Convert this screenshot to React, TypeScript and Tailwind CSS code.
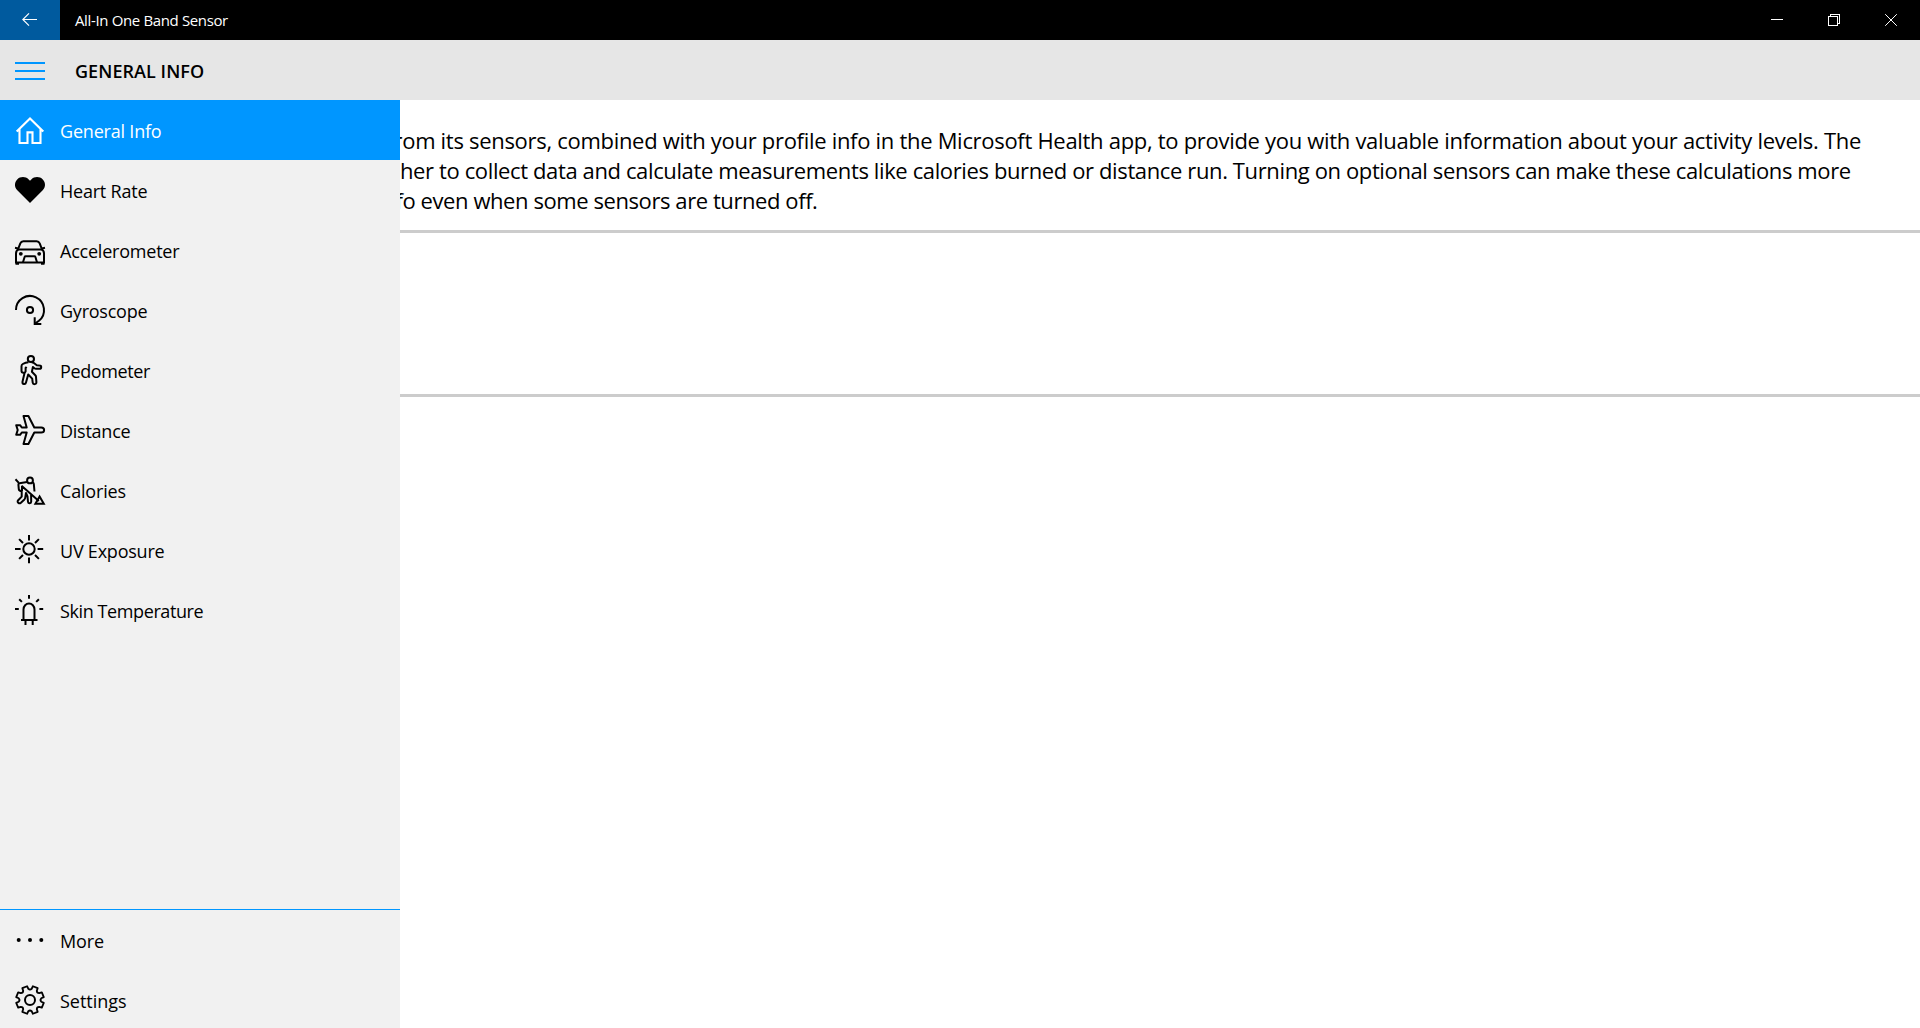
import React from 'react'

interface IconProps {
  children: React.ReactNode
}

const Icon: React.FC<IconProps> = ({ children }) => (
  <svg
    className="h-[30px] w-[30px] shrink-0 overflow-visible"
    viewBox="0 0 30 30"
    fill="none"
    stroke="currentColor"
    strokeWidth={2}
  >
    {children}
  </svg>
)

const HomeIcon = () => (
  <Icon>
    <path d="M1.7 16.6 15 3.4l13.3 13.2M4.5 14.2V28h8V17.4h5V28h8V14.2" strokeWidth={2.1} />
  </Icon>
)

const HeartIcon = () => (
  <Icon>
    <path
      fill="currentColor"
      stroke="none"
      d="M15 28 2.3 15.3C-.8 12-.8 7.5 2.2 4.4c3.1-3.1 8.3-3.2 11.5 0L15 5.7l1.3-1.3c3.2-3.2 8.4-3.1 11.5 0 3 3.1 3 7.6-.1 10.9L15 28Z"
    />
  </Icon>
)

const CarIcon = () => (
  <Icon>
    <path d="M3.2 13.8 5.3 8.3C6 6.7 6.8 6.2 8.3 6.2h13.4c1.5 0 2.3.5 3 2.1l2.1 5.5" />
    <path d="M0 12.8 3 13.4M30 12.8l-3 .6M2.5 14.5h25" />
    <path d="M3.5 14.2C1.7 15.2 1 16.6 1 18.5v9h28v-9c0-1.9-.7-3.3-2.5-4.3M.5 28.8H4M26 28.8h3.5" />
    <path d="M8 27.3 9.6 22c.2-.6.5-.8 1.1-.8h8.6c.6 0 .9.2 1.1.8l1.6 5.3" />
    <circle cx="5.8" cy="18.8" r="1.9" fill="currentColor" stroke="none" />
    <circle cx="24.2" cy="18.8" r="1.9" fill="currentColor" stroke="none" />
  </Icon>
)

const GyroscopeIcon = () => (
  <Icon>
    <path d="M1 15a14 14 0 1 1 22.9 10.8L19.8 28.8" />
    <path d="M19.7 22.3V29h6.6" />
    <circle cx="15" cy="15" r="3.1" />
  </Icon>
)

const WalkIcon = () => (
  <Icon>
    <circle cx="15.9" cy="4" r="3.1" />
    <path
      strokeLinejoin="round"
      d="M13.5 7.2c-2.2.1-4 .8-5.7 1.8-1 .6-1.3 1.1-1.3 2.2v4.6c0 1.3.6 2 1.9 2h1.2L7.5 26.8c-.4 2.5 3 3 3.5.7l2.2-8 4 4.1.5 4c.3 2.2 3.9 2 3.7-.4l-.4-5.4c0-.6-.3-1.1-.7-1.5l-3.400-3.500 1-4.800 1.500 1.300c.4.3.9.5 1.500.5h3.600c2.200 0 2.300-3.300.1-3.400l-2.800-.2-2.900-2.200c-.8-.6-1.400-.8-2.400-.8M11.600 11.900 10.600 13v3.500l-1 1.400"
    />
  </Icon>
)

const PlaneIcon = () => (
  <Icon>
    <path
      strokeLinejoin="round"
      d="M8.5 1h4.9l5.9 11.5h6.9c3.9 0 3.9 5 0 5h-6.9L13.4 29H8.5l3.2-11.5H6.8l-1.7 2.3H1.2L2.7 15 1.2 10.2h3.9l1.7 2.3h4.9L8.5 1Z"
    />
  </Icon>
)

const DiggerIcon = () => (
  <Icon>
    <circle cx="15" cy="5.4" r="2.9" />
    <path
      strokeLinejoin="round"
      d="M.5 4.3 3.6 7.6M6.5 10.8 23.8 26M12 7.1 4.5 8.2c-.8.1-1.2.6-1.1 1.4l.4 4.5c.1 1.3 1 1.9 2.9 1.9v5.6l-3.5 3.6c-1.7 1.9.9 4.1 2.7 2.5l3.5-3.3c.4-.4.7-.9.8-1.5l.8-4.9 1.5 3.5.5 5.3c.3 2.1 3.2 1.9 3.2-.2l-.1-6.6M17.6 7.4c.8.2 1.1.8 1.2 1.5l.7 7.6M7 11v5"
    />
    <path d="m24.6 21.4 4.2 7.3h-8.4l4.2-7.3Z" />
  </Icon>
)

const SunIcon = () => (
  <Icon>
    <circle cx="14" cy="14" r="5.7" />
    <path d="M14 0v5.6M14 22.6v5.6M0 14h5.6M22.6 14h5.6M4.1 4.1 8 8M20 20l3.9 3.9M4.1 23.900 8 20M20 8l3.900-3.900" />
  </Icon>
)

const LedIcon = () => (
  <Icon>
    <path d="M8.5 25V14.5a5.5 6 0 0 1 11 0V25M6 25h16.500M10.500 25v5M17.700 25v5" />
    <path d="M14 0v3.800M0 14h3.800M24.400 14h3.800M4.200 4.200l2.700 2.700M21.200 6.900l2.700-2.700" />
  </Icon>
)

const MoreIcon = () => (
  <Icon>
    <g fill="currentColor" stroke="none">
      <circle cx="3.7" cy="15" r="2" />
      <circle cx="15" cy="15" r="2" />
      <circle cx="26.3" cy="15" r="2" />
    </g>
  </Icon>
)

// eight teeth, with a rounded notch between each pair
const gearPath = (() => {
  const point = (radius: number, deg: number) => {
    const a = (deg * Math.PI) / 180
    return `${(15 + radius * Math.sin(a)).toFixed(2)} ${(15 - radius * Math.cos(a)).toFixed(2)}`
  }
  let d = ''
  for (let i = 0; i < 8; i++) {
    const a = i * 45 + 22.5
    d += `${i === 0 ? 'M' : 'L'}${point(11.4, a - 14)} L${point(14.1, a - 10.5)} L${point(14.1, a + 10.5)} L${point(11.4, a + 14)} Q${point(9.7, a + 22.5)} ${point(11.4, a + 31)} `
  }
  return d + 'Z'
})()

const GearIcon = () => (
  <Icon>
    <path d={gearPath} strokeLinejoin="round" strokeWidth={1.8} />
    <circle cx="15" cy="15" r="5" />
  </Icon>
)

interface NavItem {
  label: string
  icon: React.FC
  tracking: string
}

const mainItems: NavItem[] = [
  { label: 'General Info', icon: HomeIcon, tracking: 'tracking-[-0.2px]' },
  { label: 'Heart Rate', icon: HeartIcon, tracking: 'tracking-[-0.22px]' },
  { label: 'Accelerometer', icon: CarIcon, tracking: 'tracking-[-0.22px]' },
  { label: 'Gyroscope', icon: GyroscopeIcon, tracking: 'tracking-[-0.23px]' },
  { label: 'Pedometer', icon: WalkIcon, tracking: 'tracking-[-0.37px]' },
  { label: 'Distance', icon: PlaneIcon, tracking: 'tracking-[-0.25px]' },
  { label: 'Calories', icon: DiggerIcon, tracking: 'tracking-[-0.18px]' },
  { label: 'UV Exposure', icon: SunIcon, tracking: 'tracking-[-0.22px]' },
  { label: 'Skin Temperature', icon: LedIcon, tracking: 'tracking-[-0.4px]' },
]

const footerItems: NavItem[] = [
  { label: 'More', icon: MoreIcon, tracking: 'tracking-[-0.12px]' },
  { label: 'Settings', icon: GearIcon, tracking: 'tracking-[-0.02px]' },
]

const NavRow: React.FC<{ item: NavItem; active?: boolean }> = ({ item, active }) => (
  <button
    className={`flex h-[60px] w-full shrink-0 items-center gap-[15px] px-[15px] text-left ${
      active ? 'bg-[#0096ff] text-white' : 'text-black'
    }`}
  >
    <item.icon />
    <span className={`pt-0.5 text-[18px] leading-6 ${item.tracking}`}>{item.label}</span>
  </button>
)

const TitleBar = () => (
  <div className="flex h-10 shrink-0 items-center bg-black pr-px text-white">
    <button className="flex h-10 w-[60px] items-center justify-center bg-[#005a9e]">
      <svg className="h-4 w-4" viewBox="0 0 16 16" fill="none" stroke="currentColor" strokeWidth={1.2}>
        <path d="M15 7.5H.8M7 1.3.8 7.5 7 13.7" />
      </svg>
    </button>
    <span className="flex-1 pl-[15px] text-[15px] leading-5 tracking-[-0.36px]">All-In One Band Sensor</span>
    <button className="flex h-10 w-[57px] items-center justify-center">
      <svg className="h-3 w-3" viewBox="0 0 12 12" stroke="currentColor" shapeRendering="crispEdges">
        <path d="M0 5.5h12" />
      </svg>
    </button>
    <button className="flex h-10 w-[57px] items-center justify-center">
      <svg className="h-3 w-3" viewBox="0 0 12 12" fill="none" stroke="currentColor" shapeRendering="crispEdges">
        <path d="M.5 2.5h9v9h-9zM2.500 2.500v-2h9v9h-2" />
      </svg>
    </button>
    <button className="flex h-10 w-[57px] items-center justify-center">
      <svg className="h-3 w-3" viewBox="0 0 12 12" stroke="currentColor">
        <path d="m.2.2 11.6 11.6M11.8.2.2 11.8" />
      </svg>
    </button>
  </div>
)

const PageHeader = () => (
  <header className="flex h-[60px] shrink-0 items-center bg-[#e6e6e6]">
    <button className="flex h-[60px] w-[60px] flex-col items-center justify-center gap-1.5 pt-0.5">
      <span className="h-0.5 w-[30px] bg-[#0096ff]" />
      <span className="h-0.5 w-[30px] bg-[#0096ff]" />
      <span className="h-0.5 w-[30px] bg-[#0096ff]" />
    </button>
    <h1 className="pl-[15px] pt-0.5 text-[18px] leading-6 font-semibold tracking-[0.06px]">GENERAL INFO</h1>
  </header>
)

export default function App() {
  return (
    <div className="flex h-screen flex-col overflow-hidden bg-white font-['Open_Sans','Noto_Sans',sans-serif] text-black">
      <TitleBar />
      <PageHeader />
      <div className="flex min-h-0 flex-1">
        <nav className="flex w-[400px] shrink-0 flex-col justify-between bg-[#f1f1f1]">
          <div className="flex flex-col">
            {mainItems.map((item, index) => (
              <NavRow key={item.label} item={item} active={index === 0} />
            ))}
          </div>
          <div className="flex h-[119px] flex-col overflow-hidden border-t border-[#0096ff]">
            {footerItems.map(item => (
              <NavRow key={item.label} item={item} />
            ))}
          </div>
        </nav>

        <main className="min-w-0 flex-1 overflow-hidden">
          <div className="border-b-[3px] border-[#cccccc] pt-[25px] pb-[15px] text-[22px] leading-[30px] whitespace-nowrap">
            <p className="-ml-[6.5px] tracking-[-0.3px]">
              rom its sensors, combined with your profile info in the Microsoft Health app, to provide you with valuable information about your activity levels. The
            </p>
            <p className="tracking-[-0.378px]">
              her to collect data and calculate measurements like calories burned or distance run. Turning on optional sensors can make these calculations more
            </p>
            <p className="-ml-[4.5px] tracking-[-0.42px]">fo even when some sensors are turned off.</p>
          </div>
          <div className="h-[164px] border-b-[3px] border-[#cccccc]" />
        </main>
      </div>
    </div>
  )
}
